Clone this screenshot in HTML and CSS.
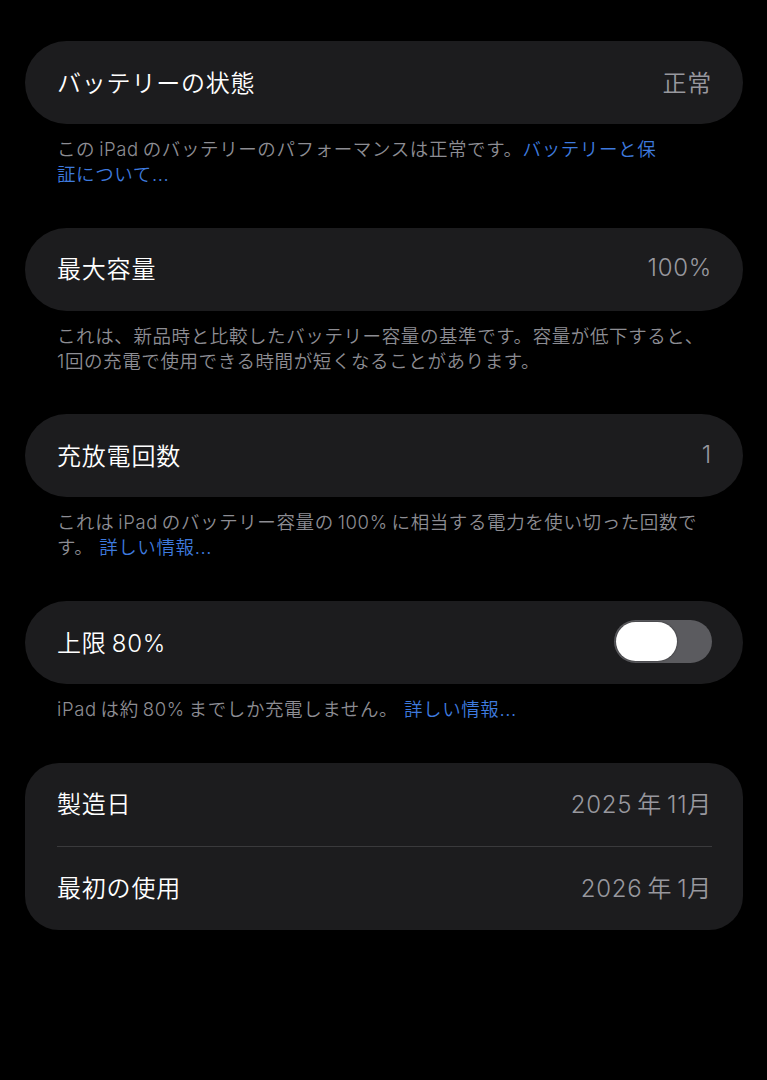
FILE: index.html
```html
<!DOCTYPE html>
<html lang="ja">
<head>
<meta charset="utf-8">
<link rel="stylesheet" href="styles.css">
</head>
<body>
<main class="page">
  <section class="group">
    <div class="card pill">
      <div class="row"><span class="label">バッテリーの状態</span><span class="value">正常</span></div>
    </div>
    <p class="note">この&#8201;iPad&#8201;のバッテリーのパフォーマンスは正常です。<a class="link">バッテリーと保<br>証について...</a></p>
  </section>

  <section class="group">
    <div class="card pill">
      <div class="row"><span class="label">最大容量</span><span class="value">100%</span></div>
    </div>
    <p class="note">これは、新品時と比較したバッテリー容量の基準です。容量が低下すると、<br>1回の充電で使用できる時間が短くなることがあります。</p>
  </section>

  <section class="group">
    <div class="card pill">
      <div class="row"><span class="label">充放電回数</span><span class="value">1</span></div>
    </div>
    <p class="note">これは&#8201;iPad&#8201;のバッテリー容量の&#8201;100%&#8201;に相当する電力を使い切った回数で<br>す。 <a class="link">詳しい情報...</a></p>
  </section>

  <section class="group">
    <div class="card pill">
      <div class="row"><span class="label">上限&#8201;80%</span><span class="toggle"><span class="knob"></span></span></div>
    </div>
    <p class="note">iPad&#8201;は約&#8201;80%&#8201;までしか充電しません。 <a class="link">詳しい情報...</a></p>
  </section>

  <section class="group">
    <div class="card block">
      <div class="row"><span class="label">製造日</span><span class="value">2025&#8201;年&#8201;11月</span></div>
      <div class="divider"></div>
      <div class="row"><span class="label">最初の使用</span><span class="value">2026&#8201;年&#8201;1月</span></div>
    </div>
  </section>
</main>
</body>
</html>
```

FILE: styles.css
```css
html, body {
  margin: 0;
  padding: 0;
  background: #000;
}
body {
  font-family: Inter, "Noto Sans CJK JP", "Noto Sans", sans-serif;
  font-weight: 350;
  color: #fff;
  width: 767px;
  height: 1080px;
  overflow: hidden;
}
.page {
  padding: 41px 24px 0 25px;
  display: flex;
  flex-direction: column;
  gap: 40.7px;
}
.group {
  display: flex;
  flex-direction: column;
}
.card {
  background: #1c1c1e;
}
.pill {
  border-radius: 42px;
}
.block {
  border-radius: 34px;
}
.row {
  height: 83px;
  box-sizing: border-box;
  padding: 0 31px 3px 32px;
  display: flex;
  align-items: center;
  justify-content: space-between;
}
.label {
  font-size: 24px;
  color: #fff;
  letter-spacing: 0.8px;
}
.value {
  font-size: 24px;
  color: #98989e;
  letter-spacing: 0.7px;
}
.toggle {
  width: 98px;
  height: 43px;
  border-radius: 22px;
  background: #5b5b5f;
  display: flex;
  align-items: center;
  padding: 0 2px;
  box-sizing: border-box;
}
.knob {
  width: 61px;
  height: 39px;
  border-radius: 20px;
  background: #fff;
  box-shadow: 0 0 2px rgba(0,0,0,0.6);
}
.divider {
  height: 1px;
  background: #3a3a3c;
  margin: 0 31px 0 32px;
}
.note {
  margin: 13px 0 0 0;
  padding: 0 20px 0 32px;
  font-size: 18.5px;
  line-height: 25px;
  color: #8d8d93;
  letter-spacing: 0.6px;
  white-space: nowrap;
}
.link {
  color: #3e7ade;
}
```
